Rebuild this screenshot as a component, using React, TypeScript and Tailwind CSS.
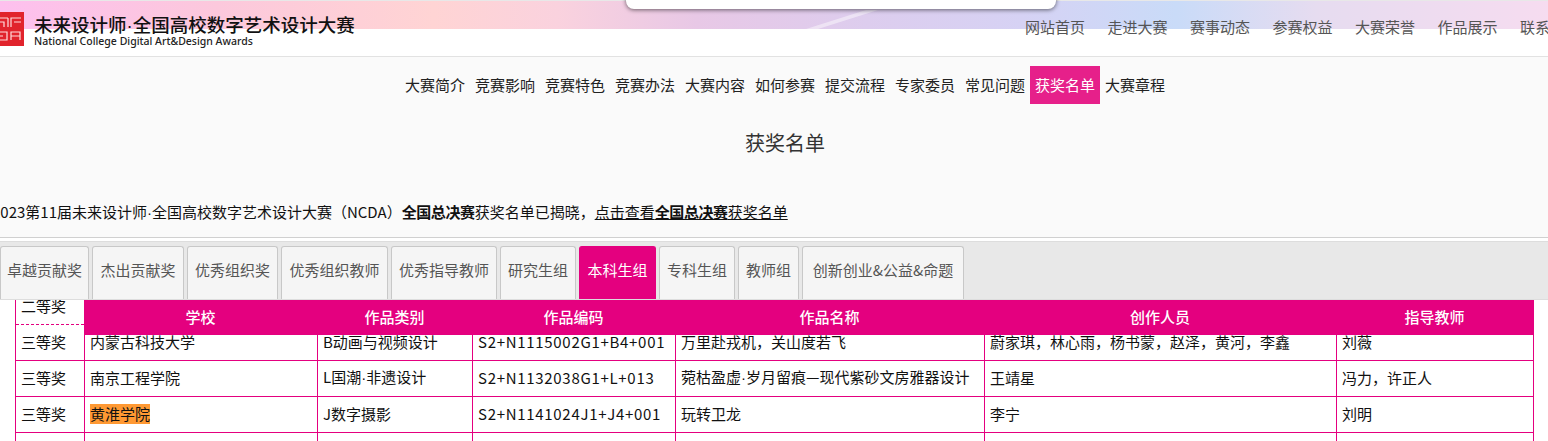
const cjk = "font-['Microsoft_YaHei','Noto_Sans_CJK_SC','Noto_Sans',sans-serif]"

const topNav = ['网站首页', '走进大赛', '赛事动态', '参赛权益', '大赛荣誉', '作品展示', '联系我们']
const subNav = ['大赛简介', '竞赛影响', '竞赛特色', '竞赛办法', '大赛内容', '如何参赛', '提交流程', '专家委员', '常见问题', '获奖名单', '大赛章程']
const tabs = [
  { label: '卓越贡献奖', width: 'w-[89px]' },
  { label: '杰出贡献奖', width: 'w-[92px]' },
  { label: '优秀组织奖', width: 'w-[91px]' },
  { label: '优秀组织教师', width: 'w-[107px]' },
  { label: '优秀指导教师', width: 'w-[106px]' },
  { label: '研究生组', width: 'w-[76px]' },
  { label: '本科生组', width: 'w-[77px]' },
  { label: '专科生组', width: 'w-[76px]' },
  { label: '教师组', width: 'w-[61px]' },
  { label: '创新创业&公益&命题', width: 'w-[162px]' },
]
const rows = [
  ['二等奖', '', '', '', '', '', ''],
  ['三等奖', '内蒙古科技大学', 'B动画与视频设计', 'S2+N1115002G1+B4+001', '万里赴戎机，关山度若飞', '蔚家琪，林心雨，杨书蒙，赵泽，黄河，李鑫', '刘薇'],
  ['三等奖', '南京工程学院', 'L国潮·非遗设计', 'S2+N1132038G1+L+013', '菀枯盈虚·岁月留痕—现代紫砂文房雅器设计', '王靖星', '冯力，许正人'],
  ['三等奖', '黄淮学院', 'J数字摄影', 'S2+N1141024J1+J4+001', '玩转卫龙', '李宁', '刘明'],
  ['', '', '', '', '', '', ''],
]

// the CJK font draws · full width, the original is a narrow latin dot
function Dotted({ text }: { text: string }) {
  const parts = text.split('·')
  return (
    <>
      {parts.map((part, i) => (
        <span key={i}>
          {i > 0 && <span className="font-['Liberation_Sans',sans-serif]">·</span>}
          {part}
        </span>
      ))}
    </>
  )
}

function Logo() {
  return (
    <svg width="24" height="34" viewBox="0 0 24 34" className="shrink-0">
      <rect width="24" height="34" fill="#e1232c" />
      <g fill="none" stroke="#ffdcdc" strokeWidth="1.2">
        <path d="M0 6h8M0 10h4v5M8 6v9" />
        <path d="M11 15V6h10M14 10h7" />
        <path d="M0 20h7v8H0M0 24h3" />
        <path d="M11 28v-8h9v8M11 24h9" />
      </g>
    </svg>
  )
}

export default function App() {
  return (
    <div className={`relative h-[441px] w-[1548px] overflow-hidden bg-white ${cjk}`}>
      {/* dialog edge poking in from above */}
      <div className="absolute left-[626px] top-[-20px] z-20 h-[29px] w-[430px] rounded-lg bg-white shadow-[0_1px_4px_rgba(0,0,0,0.55)]" />

      <header className="relative h-[57px] border-b border-[#e2e2e2]">
        <div className="absolute inset-x-0 top-0 h-[29px] border-t border-[#e8e8e8] bg-[linear-gradient(90deg,#fdc0ee_0%,#fcc8dc_14%,#ffd4d4_28%,#fad2de_36%,#e8c8e6_45%,#ddcdee_56%,#d6d2f4_66%,#c9dbf8_76%,#e6dcf0_85%,#f6dcf0_100%)]">
          <svg width="100" height="28" viewBox="0 0 100 28" className="absolute left-[800px] top-0">
            <polygon points="6,28 18,28 78,9 66,9" fill="#ffffff" opacity="0.45" />
          </svg>
        </div>
        <div className="relative flex h-full whitespace-nowrap">
          <div className="mt-3 flex">
            <Logo />
            <div className="ml-[10px] mt-[1px]">
              <div className="text-[18.5px] leading-[22px] font-medium text-[#111]">
                <Dotted text="未来设计师·全国高校数字艺术设计大赛" />
              </div>
              <div className="-mt-[1px] text-[10.5px] leading-[10px] font-medium text-[#222] font-['Noto_Sans',sans-serif]">National College Digital Art&amp;Design Awards</div>
            </div>
          </div>
          <nav className="absolute left-[1025px] top-[17px] flex gap-[22.5px] text-[15px] leading-5 text-[#555]">
            {topNav.map(item => (
              <span key={item}>{item}</span>
            ))}
          </nav>
        </div>
      </header>

      <section className="h-[180px] bg-[#fafafa]">
        <nav className="flex justify-center pt-[9px] pl-[22px] text-[15px] leading-[38px] text-[#222]">
          {subNav.map(item => (
            <span key={item} className={item === '获奖名单' ? 'bg-[#e6208a] px-[5px] text-white' : 'px-[5px]'}>
              {item}
            </span>
          ))}
        </nav>
        <h1 className="mt-[25px] pl-[22px] text-center text-[20px] leading-7 font-normal text-[#333]">获奖名单</h1>
        <p className="ml-[-8px] mt-[42px] whitespace-nowrap text-[15px] leading-[26px] text-[#111]">
          2023第11届未来设计师<Dotted text="·" />全国高校数字艺术设计大赛（NCDA）<b className="tracking-[-0.4px]">全国总决赛</b>获奖名单已揭晓，
          <span className="underline">点击查看<b className="tracking-[-0.4px]">全国总决赛</b>获奖名单</span>
        </p>
      </section>

      <div className="h-[4px] border-t border-[#d0d0d0] bg-white" />

      <div className="flex h-[59px] items-end gap-[3px] border-y border-[#dddddd] bg-[#e8e8e8]">
        {tabs.map(tab => (
          <div
            key={tab.label}
            className={`${tab.width} h-[53px] shrink-0 rounded-t-[3px] border border-b-0 text-center text-[15px] leading-[46px] whitespace-nowrap ${
              tab.label === '本科生组'
                ? 'border-[#e4007f] bg-[#e4007f] text-white'
                : 'border-[#c8c8c8] bg-[#f5f5f5] text-[#555]'
            }`}
          >
            {tab.label}
          </div>
        ))}
      </div>

      <div className="relative h-[141px] overflow-hidden">
        <div className="absolute left-[84px] top-0 z-10 grid h-[35px] w-[1449px] grid-cols-[233px_155px_203px_309px_352px_197px] items-center bg-[#e4007f] text-center text-[15px] font-medium text-white">
          <span>学校</span>
          <span>作品类别</span>
          <span>作品编码</span>
          <span>作品名称</span>
          <span>创作人员</span>
          <span>指导教师</span>
        </div>
        <table className="ml-[15px] mt-[-12px] w-[1519px] table-fixed border-collapse text-[15px] leading-5 text-[#111]">
          <colgroup>
            <col className="w-[69px]" />
            <col className="w-[233px]" />
            <col className="w-[155px]" />
            <col className="w-[203px]" />
            <col className="w-[309px]" />
            <col className="w-[352px]" />
            <col className="w-[197px]" />
          </colgroup>
          <tbody>
            {rows.map((row, i) => (
              <tr key={i} className="h-[36px]">
                {row.map((cell, j) => (
                  <td
                    key={j}
                    className={`border border-[#e4007f] px-[5px] pb-[2px] align-middle whitespace-nowrap ${i === 0 ? '[border-bottom-style:dashed]' : ''} ${i === 1 ? '[border-top-style:dashed]' : ''} ${j === 3 ? 'tracking-[0.7px]' : ''}`}
                  >
                    {cell === '黄淮学院' ? <span className="inline-block bg-[#ff9933]">{cell}</span> : <Dotted text={cell} />}
                  </td>
                ))}
              </tr>
            ))}
          </tbody>
        </table>
      </div>
    </div>
  )
}
